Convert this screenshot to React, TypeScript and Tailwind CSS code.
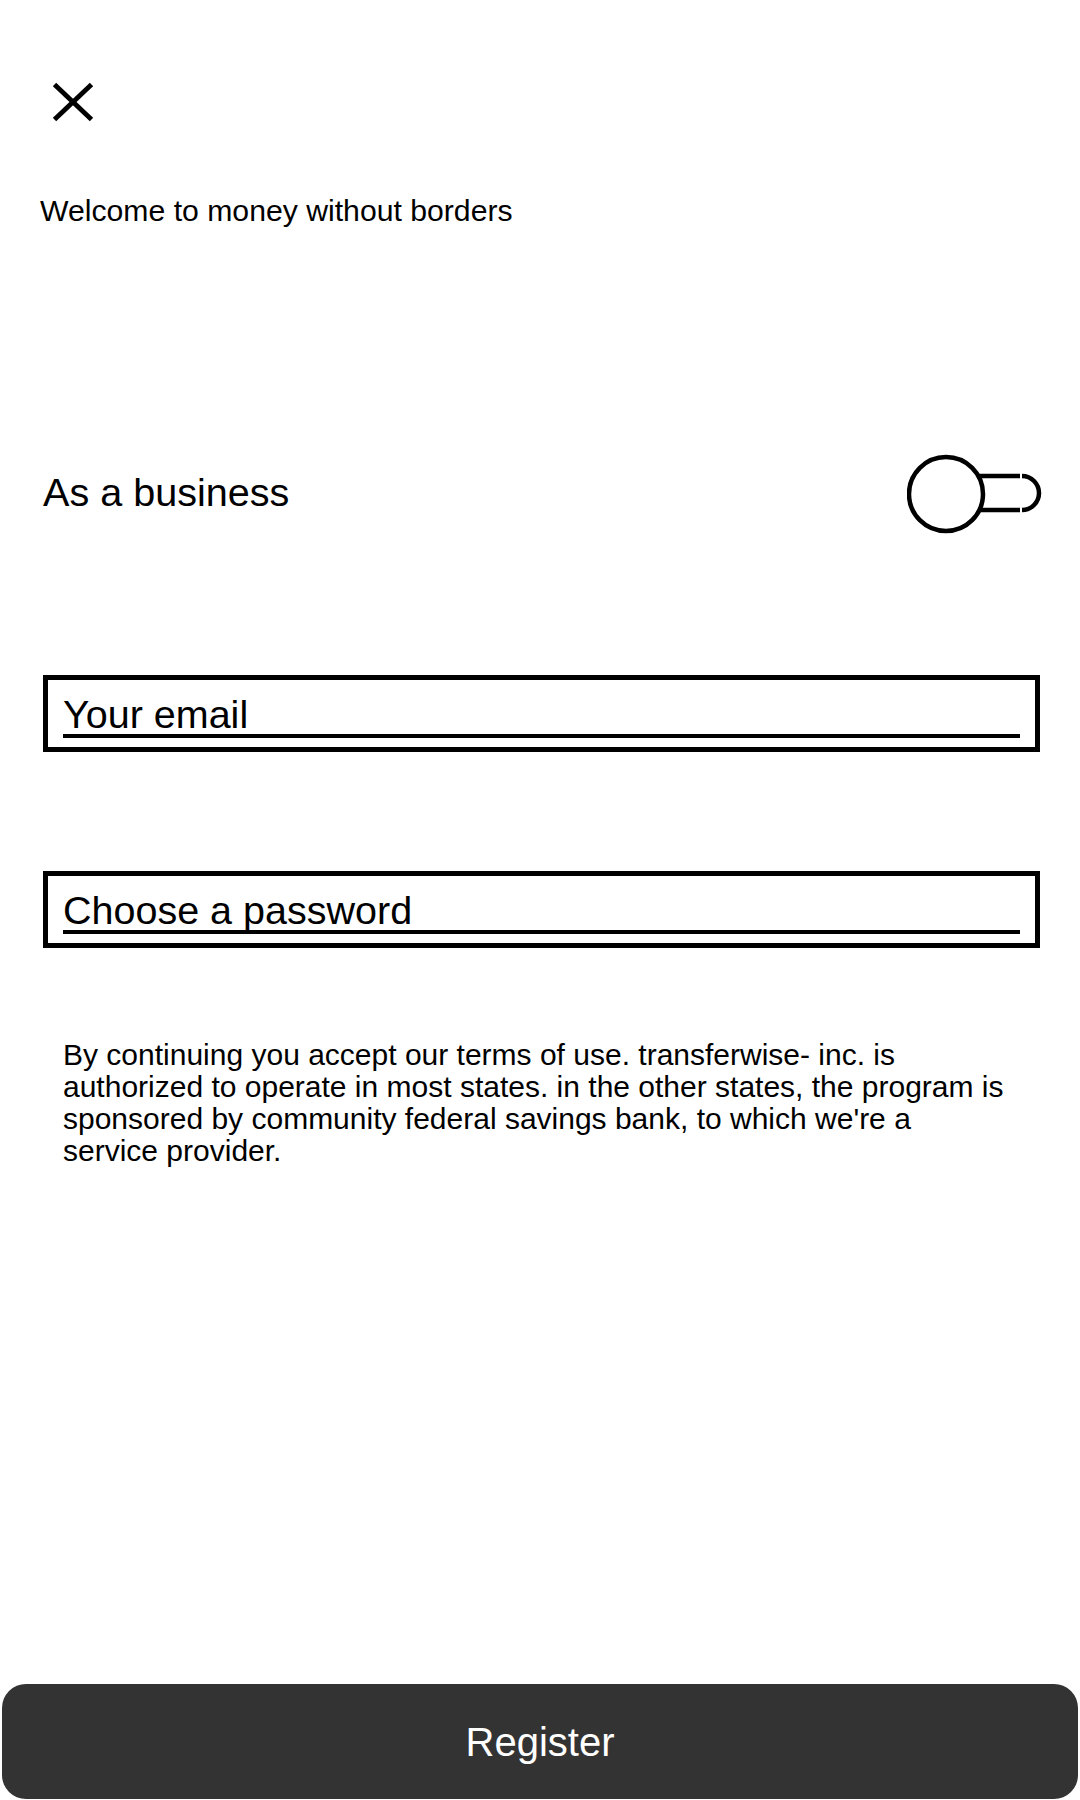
import React from "react";

function CloseIcon() {
  return (
    <svg width="44" height="42" viewBox="0 0 44 42" className="block">
      <line x1="3.5" y1="3.5" x2="40.5" y2="38.5" stroke="#000" strokeWidth="4.8" strokeLinecap="butt" />
      <line x1="40.5" y1="3.5" x2="3.5" y2="38.5" stroke="#000" strokeWidth="4.8" strokeLinecap="butt" />
    </svg>
  );
}

function Toggle() {
  return (
    <svg width="136" height="81" viewBox="0 0 136 81" className="block" role="switch" aria-checked="false">
      <line x1="60" y1="22" x2="113" y2="22" stroke="#000" strokeWidth="4.5" />
      <line x1="60" y1="56" x2="113" y2="56" stroke="#000" strokeWidth="4.5" />
      <path d="M 115 22 A 17 17 0 0 1 115 56" fill="none" stroke="#000" strokeWidth="4.5" />
      <circle cx="39" cy="40" r="37" fill="#fff" stroke="#000" strokeWidth="4.5" />
    </svg>
  );
}

function Field({ label }: { label: string }) {
  return (
    <div className="ml-[43px] mr-[40px] border-[5px] border-black pt-[14px] px-[15px] pb-[9px]">
      <div className="border-b-[4px] border-black text-[39.5px] leading-[40px] text-black">{label}</div>
    </div>
  );
}

export default function App() {
  return (
    <div
      className="relative flex h-[1800px] w-[1080px] flex-col overflow-hidden bg-white text-black"
      style={{ fontFamily: '"Liberation Sans", Arial, sans-serif' }}
    >
      <div className="ml-[51px] mt-[81px]">
        <CloseIcon />
      </div>

      <div className="ml-[40px] mt-[71px] text-[30.2px] leading-[34px]">Welcome to money without borders</div>

      <div className="mt-[227px] ml-[43px] mr-[39px] flex h-[79px] items-center justify-between">
        <div className="pb-[5px] text-[39.6px] leading-[39px]">As a business</div>
        <div className="-mr-[2px]">
          <Toggle />
        </div>
      </div>

      <div className="mt-[141px]">
        <Field label="Your email" />
      </div>

      <div className="mt-[119px]">
        <Field label="Choose a password" />
      </div>

      <p className="mt-[91px] ml-[63px] mr-[71px] text-[30px] leading-[32px]">
        By continuing you accept our terms of use. transferwise- inc. is authorized to operate in most states. in the
        other states, the program is sponsored by community federal savings bank, to which we're a service provider.
      </p>

      <button
        type="button"
        className="mx-[2px] mb-[1px] mt-auto flex h-[115px] items-center justify-center rounded-[24px] bg-[#333333] text-[40px] text-white"
        style={{ fontFamily: '"Liberation Sans", Arial, sans-serif' }}
      >
        Register
      </button>
    </div>
  );
}
